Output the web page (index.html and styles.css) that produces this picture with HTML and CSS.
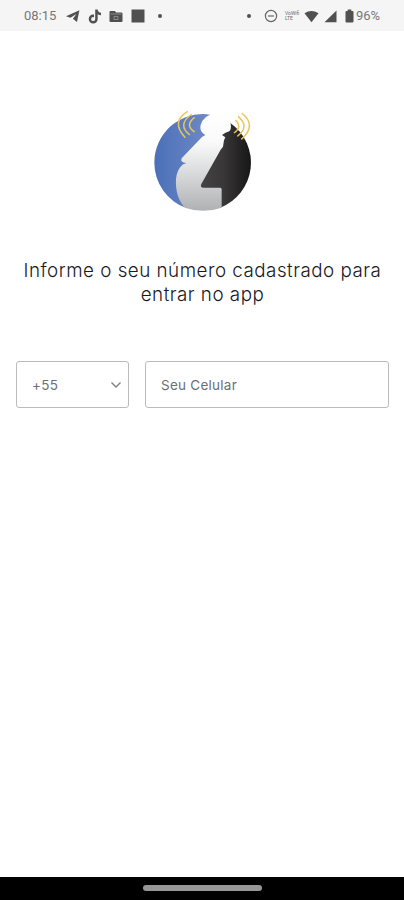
FILE: index.html
```
<!DOCTYPE html>
<html lang="pt-BR">
<head>
<meta charset="utf-8">
<title>Entrar</title>
<link rel="stylesheet" href="styles.css">
</head>
<body>
<header class="status">
  <div class="status-group">
    <span class="clock">08:15</span>
    <svg class="ic telegram" width="14" height="14" viewBox="0 0 14 14"><path d="M0 7.3 13.4 1.3 11 13 6.9 9.8 10.4 5 4.5 8.8Z"/></svg>
    <svg class="ic tiktok" width="14" height="15" viewBox="0 0 14 15"><path d="M7.2.5H9.6Q10 3.3 13 3.8V6.3Q11.200 6.300 9.700 5.300V10A4.500 4.500 0 1 1 5.200 5.500L6 5.600V8.200A2 2 0 1 0 7.200 10Z"/></svg>
    <svg class="ic wallet" width="14" height="14" viewBox="0 0 14 14"><path d="M1.500 2H6L7 3.500H12.500Q13.500 3.500 13.500 4.500V12Q13.500 13 12.500 13H1.500Q.500 13 .500 12V3Q.500 2 1.500 2Z"/><path class="cut" d="M1.500 5H12.500M5 7.500V10.500H9V7.500Z"/></svg>
    <svg class="ic square" width="14" height="14" viewBox="0 0 14 14"><path d="M.5.500h13v13H.5z"/></svg>
    <i class="dot"></i>
  </div>
  <div class="status-group">
    <i class="dot"></i>
    <svg class="ic dnd" width="14" height="14" viewBox="0 0 14 14"><circle cx="7" cy="7" r="5.600"/><path d="M4 7h6"/></svg>
    <span class="volte"><span>VoWifi</span><span>LTE</span></span>
    <svg class="ic wifi" width="15" height="13" viewBox="0 0 15 13"><path d="M.5 3.300Q7.500-1.500 14.500 3.300L7.500 12.300Z"/></svg>
    <svg class="ic signal" width="13" height="13" viewBox="0 0 13 13"><path d="M12.500.500V12.300H.5Z"/></svg>
    <svg class="ic battery" width="9" height="14" viewBox="0 0 9 14"><path d="M2.700.500h3.600V2H7.500Q8.500 2 8.500 3V12.500Q8.500 13.500 7.500 13.500H1.500Q.5 13.500.5 12.500V3Q.5 2 1.500 2H2.700Z"/></svg>
    <span class="percent">96%</span>
  </div>
</header>
<main class="content">
  <svg class="logo" width="120" height="120" viewBox="0 0 360 360">
    <defs>
      <linearGradient id="blue"><stop offset="0" stop-color="#4a70b9"/><stop offset="1" stop-color="#7189c5"/></linearGradient>
      <linearGradient id="dark"><stop offset="0" stop-color="#484546"/><stop offset=".5" stop-color="#393738"/><stop offset="1" stop-color="#171617"/></linearGradient>
      <linearGradient id="silver" x1="0" y1="0" x2="0" y2="1"><stop offset="0" stop-color="#fff"/><stop offset=".28" stop-color="#fafafa"/><stop offset=".6" stop-color="#dadbdc"/><stop offset="1" stop-color="#afb1b3"/></linearGradient>
    </defs>
    <path fill="url(#blue)" d="M204 44A145 145 0 0 0 37 188A145 145 0 0 0 135 325L200 200Z"/>
    <path fill="url(#dark)" d="M266 70A145 145 0 0 1 235 323L160 270 200 120Z"/>
    <path fill="url(#silver)" d="M214 43C238 43 260 55 266 72Q269 87 262 94Q250 97 240 105L250 112 246 121 243 140 236 149 178 252Q173 263 185 263H235Q239 263 239 268V323Q184 342 129 323C108 301 100 270 102 237Q104 211 121 194L133 189Q113 188 119 175L180 111 190 105Q171 94 176 75Q185 46 214 43Z"/>
    <g class="waves">
      <path d="M137 34Q85 66 130 113"/><path d="M149 42Q104 75 144 105"/><path d="M158 52Q127 76 158 96"/>
      <path d="M299 39Q346 76 298 118"/><path d="M288 49Q325 79 286 109"/><path d="M280 60Q302 80 276 99"/>
    </g>
  </svg>
  <h1 class="title">Informe o seu número cadastrado para entrar no app</h1>
  <form class="phone">
    <div class="field country"><span>+55</span><svg width="12" height="8" viewBox="0 0 12 8"><path d="M1.500 1.500 6 6 10.500 1.500"/></svg></div>
    <div class="field number">Seu Celular</div>
  </form>
</main>
<footer class="navbar"><i class="handle"></i></footer>
</body>
</html>
```
FILE: styles.css
```
* { box-sizing: border-box; }
body {
  margin: 0;
  height: 900px;
  display: flex;
  flex-direction: column;
  background: #fff;
  font-family: Inter, sans-serif;
}
.status {
  height: 31px;
  padding: 1px 22px 0 24px;
  display: flex;
  justify-content: space-between;
  background: #f5f5f5;
  color: #6b6b6b;
}
.status-group { display: flex; align-items: center; }
.clock, .percent { font: 13px/16px Roboto, sans-serif; color: #777; }
.clock { width: 34px; }
.percent { width: 26px; margin-left: 2px; }
.ic { display: block; fill: #505050; }
.telegram { margin-left: 8px; }
.tiktok { margin-left: 8px; }
.wallet { margin-left: 7px; }
.square { margin-left: 8px; }
.cut { fill: none; stroke: #999; stroke-width: .8; }
.dot { width: 4px; height: 4px; border-radius: 50%; background: #505050; }
.square + .dot { margin-left: 13px; }
.dnd { margin-left: 13px; fill: none; stroke: #666; stroke-width: 1.200; }
.volte {
  width: 15px;
  margin-left: 7px;
  display: flex;
  flex-direction: column;
  font: 5px/5.500px Roboto, sans-serif;
}
.wifi { margin-left: 4px; }
.signal { margin-left: 5px; }
.battery { margin-left: 8px; }
.content {
  flex: 1;
  padding: 69px 15px 0 16px;
  display: flex;
  flex-direction: column;
}
.logo { display: block; margin-left: 126px; }
.waves { fill: none; stroke: #e9c557; stroke-width: 4.500; }
.title {
  margin: 39px -8px 0;
  font-size: 18.800px;
  line-height: 24px;
  font-weight: 300;
  letter-spacing: .5px;
  text-align: center;
  color: #17191f;
}
.phone { margin: 54px 0 0; display: flex; gap: 16px; }
.field {
  height: 47px;
  padding: 0 15px;
  display: flex;
  align-items: center;
  border: 1px solid #b9bbbd;
  border-radius: 3px;
  font-size: 13.500px;
  letter-spacing: .25px;
  color: #6b6f75;
}
.country { width: 113px; padding-right: 6px; justify-content: space-between; }
.country path { fill: none; stroke: #7b7f86; stroke-width: 1.400; }
.number { flex: 1; }
.navbar {
  height: 23px;
  display: flex;
  justify-content: center;
  background: #000;
}
.handle { width: 119px; height: 6px; margin-top: 8px; border-radius: 3px; background: #969696; }
```
